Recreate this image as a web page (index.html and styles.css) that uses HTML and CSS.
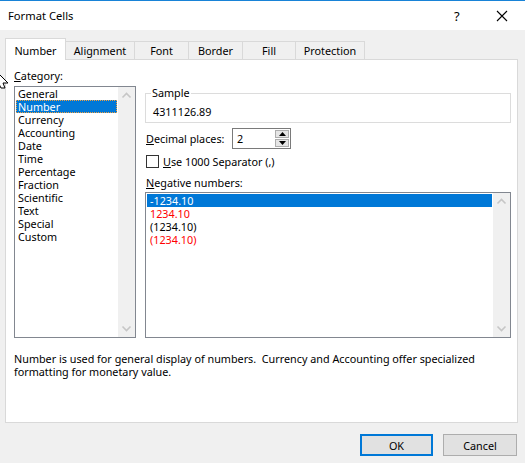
FILE: index.html
```html
<!DOCTYPE html>
<html lang="en">
<head>
    <meta charset="UTF-8">
    <title>Format Cells</title>
    <link rel="stylesheet" href="styles.css">
</head>
<body>
    <div class="dialog">
        <div class="titlebar">
            <span class="title">Format Cells</span>
            <span class="help">?</span>
            <svg class="close" width="12" height="12" viewBox="0 0 12 12"><path d="M1 1 L11 11 M11 1 L1 11" stroke="#000" stroke-width="1.1"/></svg>
        </div>

        <div class="tabs">
            <div class="tab active">Number</div>
            <div class="tab tab-alignment">Alignment</div>
            <div class="tab tab-font">Font</div>
            <div class="tab tab-border">Border</div>
            <div class="tab tab-fill">Fill</div>
            <div class="tab tab-protection">Protection</div>
        </div>

        <div class="panel">
            <div class="main">
                <div class="label cat-label"><u>C</u>ategory:</div>
                <div class="listbox cat-list">
                    <ul class="items">
                        <li>General</li>
                        <li class="selected focused">Number</li>
                        <li>Currency</li>
                        <li>Accounting</li>
                        <li>Date</li>
                        <li>Time</li>
                        <li>Percentage</li>
                        <li>Fraction</li>
                        <li>Scientific</li>
                        <li>Text</li>
                        <li>Special</li>
                        <li>Custom</li>
                    </ul>
                    <div class="scrollbar">
                        <svg width="17" height="17" viewBox="0 0 17 17"><polyline points="4.5,10.5 8.5,6.5 12.5,10.5" fill="none" stroke="#c6c6c6" stroke-width="1.6"/></svg>
                        <svg width="17" height="17" viewBox="0 0 17 17"><polyline points="4.5,6.5 8.5,10.5 12.5,6.5" fill="none" stroke="#c6c6c6" stroke-width="1.6"/></svg>
                    </div>
                </div>

                <div class="options">
                    <fieldset class="sample">
                        <legend>Sample</legend>
                        <div class="sample-value">4311126.89</div>
                    </fieldset>

                    <div class="decimal-row">
                        <span class="label decimal-label"><u>D</u>ecimal places:</span>
                        <div class="spin">
                            <span class="spin-value">2</span>
                            <div class="spin-buttons">
                                <div class="spin-btn"><svg width="7" height="4" viewBox="0 0 7 4"><polygon points="0,4 3.5,0 7,4" fill="#000"/></svg></div>
                                <div class="spin-btn"><svg width="7" height="4" viewBox="0 0 7 4"><polygon points="0,0 3.5,4 7,0" fill="#000"/></svg></div>
                            </div>
                        </div>
                    </div>

                    <div class="check-row">
                        <span class="checkbox"></span>
                        <span class="label"><u>U</u>se 1000 Separator (,)</span>
                    </div>

                    <div class="label neg-label"><u>N</u>egative numbers:</div>
                    <div class="listbox neg-list">
                        <ul class="items">
                            <li class="selected">-1234.10</li>
                            <li class="red">1234.10</li>
                            <li>(1234.10)</li>
                            <li class="red">(1234.10)</li>
                        </ul>
                        <div class="scrollbar">
                            <svg width="17" height="17" viewBox="0 0 17 17"><polyline points="4.5,10.5 8.5,6.5 12.5,10.5" fill="none" stroke="#c6c6c6" stroke-width="1.6"/></svg>
                            <svg width="17" height="17" viewBox="0 0 17 17"><polyline points="4.5,6.5 8.5,10.5 12.5,6.5" fill="none" stroke="#c6c6c6" stroke-width="1.6"/></svg>
                        </div>
                    </div>
                </div>
            </div>

            <p class="desc">Number is used for general display of numbers.&nbsp; Currency and Accounting offer specialized<br>formatting for monetary value.</p>
        </div>

        <div class="buttons">
            <button class="btn btn-ok">OK</button>
            <button class="btn">Cancel</button>
        </div>

        <svg class="cursor" width="9" height="17" viewBox="0 0 9 17"><polygon points="-3,0 8,11 3,11 5,16 1,16 -1,12 -3,14" fill="#fff" stroke="#000" stroke-width="1"/></svg>
    </div>
</body>
</html>
```

FILE: styles.css
```css
* {
    box-sizing: border-box;
}
body {
    margin: 0;
    background-color: #f0f0f0;
    font-family: "Noto Sans", "Open Sans", sans-serif;
    font-size: 10.8px;
    color: #000;
}
.dialog {
    position: relative;
    width: 525px;
    height: 463px;
    overflow: hidden;
}
.titlebar {
    display: flex;
    align-items: center;
    height: 30px;
    padding-left: 8px;
    background-color: #fff;
    border-top: 1px solid #1883d7;
}
.title {
    flex: 1;
    font-size: 11.2px;
}
.help {
    width: 20px;
    font-size: 13px;
    margin-right: 22px;
}
.close {
    margin-right: 17px;
}
.tabs {
    display: flex;
    align-items: flex-end;
    margin-top: 8px;
    padding-left: 5px;
    height: 21px;
}
.tab {
    height: 18px;
    padding-top: 2px;
    line-height: 14px;
    text-align: center;
    border-top: 1px solid #d9d9d9;
    border-right: 1px solid #d9d9d9;
}
.tab.active {
    position: relative;
    width: 61px;
    height: 22px;
    margin-bottom: -1px;
    padding-top: 5px;
    background-color: #fff;
    border-left: 1px solid #d9d9d9;
}
.tab-alignment { width: 69px; }
.tab-font { width: 54px; }
.tab-border { width: 54px; }
.tab-fill { width: 53px; }
.tab-protection { width: 69px; }
.panel {
    width: 513px;
    height: 364px;
    margin-left: 5px;
    padding: 9px 0 0 8px;
    background-color: #fff;
    border: 1px solid #d9d9d9;
}
.main {
    display: grid;
    grid-template-columns: 122px 366px;
    grid-template-rows: 14px auto;
    column-gap: 9px;
    row-gap: 3px;
}
.label {
    line-height: 14px;
    white-space: nowrap;
}
.cat-label {
    grid-column: 1 / 3;
}
.listbox {
    display: flex;
    border: 1px solid #828790;
    background-color: #fff;
}
.cat-list {
    height: 252px;
}
.items {
    flex: 1;
    list-style: none;
    margin: 0;
    padding: 0 1px;
}
.neg-list .items {
    padding-top: 1px;
}
.items li {
    height: 13px;
    line-height: 13px;
    padding-left: 2px;
}
.neg-list .items li {
    padding-left: 3px;
}
.items li.selected {
    background-color: #0078d7;
    color: #fff;
}
.items li.focused {
    outline: 1px dotted #f0a040;
    outline-offset: -1px;
}
.items li.red {
    color: #ff0000;
}
.scrollbar {
    width: 17px;
    display: flex;
    flex-direction: column;
    justify-content: space-between;
    background-color: #f0f0f0;
}
.sample {
    margin: 0;
    padding: 5px 7px 3px 7px;
    border: 1px solid #dcdcdc;
}
.sample legend {
    padding: 0 1px;
    margin-left: -2px;
    line-height: 14px;
}
.sample-value {
    line-height: 14px;
}
.decimal-row {
    display: flex;
    align-items: center;
    margin-top: 5px;
    height: 21px;
}
.decimal-label {
    width: 87px;
    padding-left: 1px;
}
.spin {
    display: flex;
    width: 59px;
    height: 21px;
    border: 1px solid #7a7a7a;
}
.spin-value {
    flex: 1;
    padding-left: 4px;
    line-height: 19px;
}
.spin-buttons {
    width: 16px;
    display: flex;
    flex-direction: column;
    padding: 1px;
    gap: 1px;
}
.spin-btn {
    flex: 1;
    display: flex;
    align-items: center;
    justify-content: center;
    background-color: #e5e5e5;
    border: 1px solid #adadad;
}
.check-row {
    display: flex;
    align-items: center;
    gap: 4px;
    margin-top: 6px;
    height: 13px;
    padding-left: 1px;
}
.checkbox {
    width: 13px;
    height: 13px;
    border: 1px solid #333;
    background-color: #fff;
}
.neg-label {
    margin-top: 8px;
    padding-left: 1px;
}
.neg-list {
    margin-top: 2px;
    height: 146px;
}
.desc {
    margin: 14px 0 0 0;
    line-height: 13px;
    white-space: nowrap;
}
.buttons {
    display: flex;
    justify-content: flex-end;
    gap: 10px;
    margin-top: 11px;
    padding-right: 8px;
}
.btn {
    width: 74px;
    height: 22px;
    padding: 0;
    font-family: inherit;
    font-size: 10.8px;
    color: #000;
    background-color: #e1e1e1;
    border: 1px solid #adadad;
}
.btn-ok {
    width: 73px;
    border: 2px solid #0078d7;
}
.cursor {
    position: absolute;
    left: 0;
    top: 72px;
}
```
